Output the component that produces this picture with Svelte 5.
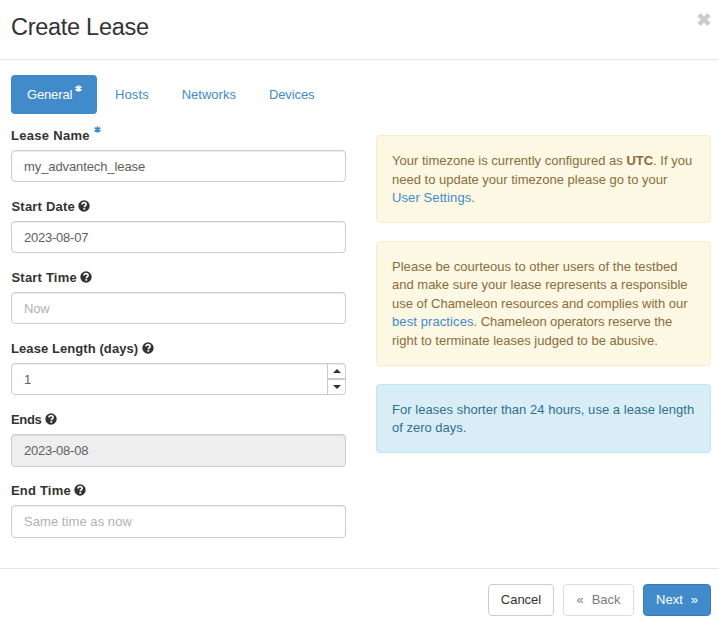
<script>
  const tabs = [
    { name: 'Hosts', gap: 18, spacing: 0.1 },
    { name: 'Networks', gap: 33, spacing: 0 },
    { name: 'Devices', gap: 33, spacing: -0.1 }
  ];
  const fields = [
    { label: 'Lease Name', required: true, value: 'my_advantech_lease', labelSpacing: 0.3, spacing: -0.1 },
    { label: 'Start Date', value: '2023-08-07', labelSpacing: 0.2, spacing: -0.23 },
    { label: 'Start Time', placeholder: 'Now', labelSpacing: 0.2, spacing: -0.15 },
    { label: 'Lease Length (days)', value: '1', spinner: true, labelSpacing: 0.08 },
    { label: 'Ends', value: '2023-08-08', disabled: true, labelSpacing: -0.35, spacing: -0.23 },
    { label: 'End Time', placeholder: 'Same time as now', labelSpacing: 0.2, spacing: 0.06 }
  ];
</script>

{#snippet asterisk()}
  <svg class="asterisk" viewBox="0 0 7 7" width="7" height="7"><path d="M3.5 .2V6.8M.6 1.8L6.4 5.2M6.4 1.8L.6 5.2" fill="none" stroke="currentColor" stroke-width="1.7" /></svg>
{/snippet}

{#snippet help()}
  <svg class="help" viewBox="0 0 12 12" width="12" height="12">
    <circle cx="6" cy="6" r="5.7" fill="#333" />
    <path d="M4 4.5C4 3.2 4.8 2.6 6 2.6S8.1 3.2 8.1 4.4C8.1 5.8 6.3 5.7 6.3 7.2" fill="none" stroke="#fff" stroke-width="1.6" />
    <path d="M5.4 8.1H7.2V9.7H5.4Z" fill="#fff" />
  </svg>
{/snippet}

<div class="modal">
  <header>
    <h3>Create Lease</h3>
    <button class="close" aria-label="Close"><svg viewBox="0 0 14 14" width="14" height="14"><path d="M2 1.7L12 11.3M12 1.7L2 11.3" stroke="#ccc" stroke-width="4.4" /></svg></button>
  </header>
  <main>
    <nav>
      <a class="active" href="#general"><span>General</span>{@render asterisk()}</a>
      {#each tabs as tab}
        <a href="#tab" style:margin-left="{tab.gap}px" style:letter-spacing="{tab.spacing}px">{tab.name}</a>
      {/each}
    </nav>
    <div class="columns">
      <form>
        {#each fields as f, i}
          <div class="group">
            <div class="label" class:indent={f.label.startsWith('Start')}><span style:letter-spacing="{f.labelSpacing}px">{f.label}</span>{#if f.required}{@render asterisk()}{:else}{@render help()}{/if}</div>
            <div class="input" class:tall={i > 3} class:disabled={f.disabled}>
              <span class="value" class:placeholder={f.placeholder} style:letter-spacing="{f.spacing ?? 0}px">{f.value ?? f.placeholder}</span>
              {#if f.spinner}
                <div class="spinner">
                  <i><svg width="8" height="4" viewBox="0 0 8 4"><path d="M0 4L4 0L8 4Z" fill="#333" /></svg></i>
                  <i><svg width="8" height="4" viewBox="0 0 8 4"><path d="M0 0L4 4L8 0Z" fill="#333" /></svg></i>
                </div>
              {/if}
            </div>
          </div>
        {/each}
      </form>
      <aside>
        <p class="warning">
          <span>Your timezone is currently configured as <b>UTC</b>. If you</span>
          <span>need to update your timezone please go to your</span>
          <span class="loose"><a href="#settings">User Settings</a>.</span>
        </p>
        <p class="warning">
          <span class="wide">Please be courteous to other users of the testbed</span>
          <span>and make sure your lease represents a responsible</span>
          <span>use of Chameleon resources and complies with our</span>
          <span><a class="loose" href="#practices">best practices</a><em>. Chameleon operators reserve the</em></span>
          <span>right to terminate leases judged to be abusive.</span>
        </p>
        <p class="info">
          <span class="wide">For leases shorter than 24 hours, use a lease length</span>
          <span>of zero days.</span>
        </p>
      </aside>
    </div>
  </main>
  <footer>
    <button class="cancel">Cancel</button>
    <button class="back"><span>«</span><span>Back</span></button>
    <button class="next"><span>Next</span><span>»</span></button>
  </footer>
</div>

<style>
  .modal { box-sizing: border-box; width: 719px; height: 628px; overflow: hidden; background: #fff; color: #333; font: 13px/18.57px "Liberation Sans", Arial, sans-serif; display: flex; flex-direction: column; }
  .modal * { box-sizing: border-box; }
  header { height: 60px; border-bottom: 1px solid #e5e5e5; display: flex; justify-content: space-between; padding: 13px 8px 0 11px; flex: none; }
  h3 { margin: 0; font-size: 23.5px; line-height: 28px; font-weight: 400; letter-spacing: -.28px; }
  button { font: inherit; }
  .close { background: none; border: 0; padding: 0; height: 14px; display: flex; }
  main { height: 508px; padding: 15px 8px 0 11px; flex: none; }
  a { color: #428bca; text-decoration: none; }
  nav { display: flex; height: 39px; line-height: 39px; }
  .active { width: 86px; background: #428bca; color: #fff; border-radius: 4px; padding-left: 16px; display: flex; }
  .active span { letter-spacing: -.15px; }
  .asterisk { flex: none; }
  .active .asterisk { margin: 10px 0 0 3px; }
  .columns { display: flex; gap: 30px; }
  form { width: 335px; padding-top: 12px; }
  .group { height: 71px; }
  .label { height: 24px; line-height: 19px; font-weight: 700; display: flex; }
  .label.indent { padding-left: .5px; }
  .label .asterisk { color: #428bca; margin: 0 0 0 4px; }
  .help { margin: 3px 0 0 3.5px; flex: none; }
  .input { height: 32px; border: 1px solid #ccc; border-radius: 4px; box-shadow: inset 0 1px 1px rgba(0,0,0,.075); display: flex; justify-content: space-between; }
  .tall { height: 33px; }
  .value { padding: 7px 12px; color: #606060; line-height: 18px; height: 30px; }
  .value.placeholder { color: #b2b2b2; }
  .disabled { background: #eee; }
  .spinner { width: 18px; border-left: 1px solid #ccc; display: flex; flex-direction: column; }
  .spinner i { flex: 1; display: flex; align-items: center; justify-content: center; }
  .spinner i + i { border-top: 2px solid #ccc; }
  aside { width: 335px; padding-top: 21px; }
  p { margin: 0 0 18px; padding: 16px 15px 14px; border: 1px solid; border-radius: 4px; }
  p span { display: block; white-space: nowrap; }
  em { font-style: normal; letter-spacing: -.07px; }
  .wide { letter-spacing: .03px; }
  .loose { letter-spacing: .1px; }
  .warning { color: #8a6d3b; background: #fcf8e3; border-color: #faebcc; }
  .info { color: #31708f; background: #d9edf7; border-color: #bce8f1; }
  footer { height: 60px; border-top: 1px solid #e5e5e5; display: flex; justify-content: flex-end; padding: 15px 8px 0 0; gap: 9px; flex: none; }
  footer button { height: 32px; border: 1px solid #ccc; border-radius: 4px; background: #fff; color: #333; padding: 0; display: flex; align-items: center; justify-content: center; gap: 8px; }
  .cancel { width: 66px; }
  footer .back { width: 71px; opacity: .65; }
  footer .next { width: 68px; background: #428bca; border-color: #357ebd; color: #fff; }
</style>
